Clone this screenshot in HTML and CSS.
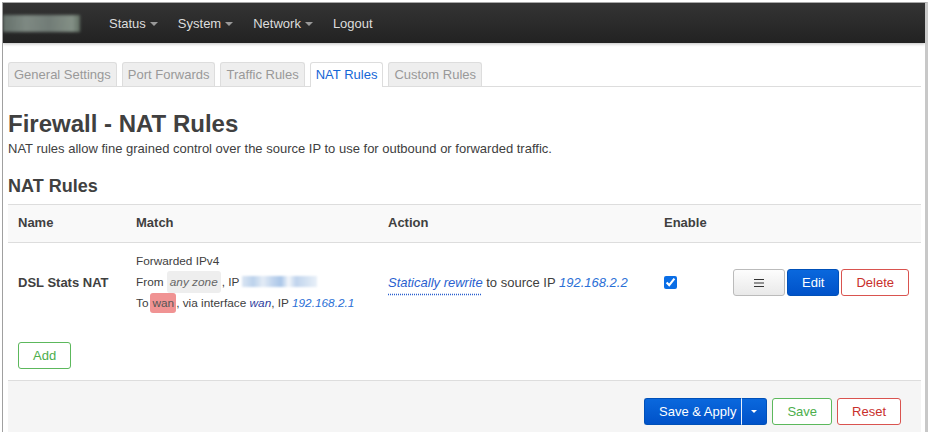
FILE: index.html
```html
<!DOCTYPE html>
<html>
<head>
<meta charset="utf-8">
<title>Firewall - NAT Rules</title>
<link rel="stylesheet" href="styles.css">
</head>
<body>
<div class="window">
  <header class="navbar">
    <div class="brand"></div>
    <ul class="menu">
      <li class="menu-item">Status<span class="caret"></span></li>
      <li class="menu-item">System<span class="caret"></span></li>
      <li class="menu-item">Network<span class="caret"></span></li>
      <li class="menu-item">Logout</li>
    </ul>
  </header>
  <main class="main">
    <ul class="tabs">
      <li class="tab">General Settings</li>
      <li class="tab">Port Forwards</li>
      <li class="tab">Traffic Rules</li>
      <li class="tab active">NAT Rules</li>
      <li class="tab">Custom Rules</li>
    </ul>
    <h2 class="title">Firewall - NAT Rules</h2>
    <p class="desc">NAT rules allow fine grained control over the source IP to use for outbound or forwarded traffic.</p>
    <h3 class="section-title">NAT Rules</h3>
    <div class="table">
      <div class="thead">
        <div class="th">Name</div>
        <div class="th">Match</div>
        <div class="th">Action</div>
        <div class="th">Enable</div>
        <div class="th"></div>
      </div>
      <div class="trow">
        <div class="td name">DSL Stats NAT</div>
        <div class="td match">
          <div class="line">Forwarded IPv4</div>
          <div class="line">From <span class="zone any">any zone</span>, IP <span class="blur-ip"></span></div>
          <div class="line">To<span class="zone wan">wan</span>, via interface <em class="dev">wan</em>, IP <em class="ip">192.168.2.1</em></div>
        </div>
        <div class="td action"><a class="link">Statically rewrite</a> to source IP <em class="ip">192.168.2.2</em></div>
        <div class="td enable"><input type="checkbox" class="check" checked></div>
        <div class="td buttons">
          <button class="btn btn-plain" aria-label="Drag"><svg width="10" height="10" viewBox="0 0 10 10"><path d="M0 1.5H10M0 5H10M0 8.5H10" stroke="#333" stroke-width="1.2" fill="none"/></svg></button>
          <button class="btn btn-primary">Edit</button>
          <button class="btn btn-negative">Delete</button>
        </div>
      </div>
    </div>
    <div class="add-row">
      <button class="btn btn-positive">Add</button>
    </div>
    <div class="footer">
      <div class="split">
        <button class="btn btn-primary split-main">Save &amp; Apply</button><button class="btn btn-primary split-caret" aria-label="More"><span class="caret-w"></span></button>
      </div>
      <button class="btn btn-positive">Save</button>
      <button class="btn btn-negative">Reset</button>
    </div>
  </main>
</div>
</body>
</html>
```
FILE: styles.css
```css
* { box-sizing: border-box; }
body {
  margin: 0;
  font-family: "Liberation Sans", Arial, sans-serif;
  color: #404040;
  background: #fff;
}
.window {
  margin: 2px 0 0 2px;
  border-top: 1px solid #a8a8a8;
  border-left: 1px solid #a0a0a0;
  border-right: 3px solid #c8c8c8;
  height: 430px;
  overflow: hidden;
}
.navbar {
  height: 40px;
  display: flex;
  align-items: center;
  background: linear-gradient(#343434, #222);
  box-shadow: 0 1px 3px rgba(0,0,0,.25);
}
.brand {
  width: 77px;
  height: 17px;
  margin-right: 19px;
  background: linear-gradient(90deg, #6f7c76, #8d9a92 30%, #7e8a84 60%, #93a296 90%, #6a7a6c);
  filter: blur(1.5px);
  opacity: .85;
}
.menu {
  display: flex;
  list-style: none;
  margin: 0;
  padding: 0;
}
.menu-item {
  padding: 0 10px;
  font-size: 13px;
  color: #ddd;
  display: flex;
  align-items: center;
}
.caret {
  width: 0;
  height: 0;
  margin-left: 4px;
  margin-top: 1px;
  border-top: 4px solid #999;
  border-left: 4px solid transparent;
  border-right: 4px solid transparent;
}
.main {
  padding: 0 4px 0 5px;
}
.tabs {
  list-style: none;
  margin: 19px 0 0;
  padding: 0;
  display: flex;
  border-bottom: 1px solid #ddd;
  height: 25px;
}
.tab {
  height: 24px;
  line-height: 23px;
  padding: 0 5px;
  margin-right: 5px;
  font-size: 13px;
  color: #999;
  background: #eee;
  border: 1px solid #ddd;
  border-bottom: none;
  border-radius: 3px 3px 0 0;
}
.tab.active {
  background: #fff;
  color: #1466d6;
  height: 25px;
}
.title {
  margin: 23px 0 0;
  font-size: 24px;
  line-height: 28px;
  font-weight: bold;
  color: #404040;
}
.desc {
  margin: 2px 0 0;
  font-size: 13px;
  line-height: 18px;
  color: #404040;
}
.section-title {
  margin: 16px 0 0;
  font-size: 18px;
  line-height: 24px;
  font-weight: bold;
  color: #404040;
}
.table {
  margin-top: 6px;
}
.thead, .trow {
  display: grid;
  grid-template-columns: 118px 252px 276px 60px 1fr;
}
.thead {
  background: #f9f9f9;
  border-top: 1px solid #ddd;
  border-bottom: 1px solid #ddd;
  height: 39px;
}
.th {
  padding: 10px 10px 0;
  font-size: 13px;
  line-height: 16px;
  font-weight: bold;
  color: #404040;
}
.trow {
  padding: 8px 0;
}
.td {
  padding: 0 10px;
  align-self: center;
  font-size: 13px;
}
.name {
  font-weight: bold;
  color: #404040;
}
.match {
  font-size: 11.8px;
  color: #404040;
}
.line {
  height: 21px;
  line-height: 21px;
  white-space: nowrap;
}
.zone {
  display: inline-block;
  vertical-align: middle;
  border-radius: 3px;
  margin-top: -2px;
}
.zone.any {
  background: #eee;
  color: #666;
  font-style: italic;
  line-height: 18px;
  padding: 2px 3px;
  margin-right: 1px;
}
.zone.wan {
  background: #f09393;
  color: #555;
  line-height: 16px;
  padding: 2px 2px;
  margin-left: 2px;
}
.blur-ip {
  display: inline-block;
  vertical-align: middle;
  margin-top: -3px;
  width: 75px;
  height: 11px;
  background: linear-gradient(90deg, #dbe6f3 0, #bcd2ec 15%, #e4ecf6 28%, #c3d6ee 40%, #aac6e8 52%, #f4f7fb 62%, #c0d4ed 72%, #d3e1f2 85%, #e9f0f8 100%);
  filter: blur(1.2px);
}
.dev {
  color: #2e3ea0;
}
.ip {
  color: #2a6fd6;
}
.action {
  white-space: nowrap;
}
.link {
  color: #2a5fcf;
  font-style: italic;
  text-decoration: underline dotted #2a5fcf;
  text-underline-offset: 7px;
}
.enable {
  line-height: 0;
}
.check {
  margin: 0;
  width: 13px;
  height: 13px;
  accent-color: #0a6ee6;
}
.buttons {
  display: flex;
  justify-content: flex-end;
  gap: 2px;
  padding-right: 12px;
}
.btn {
  height: 27px;
  line-height: 25px;
  padding: 0 14px;
  font-family: "Liberation Sans", Arial, sans-serif;
  font-size: 13px;
  border-radius: 3px;
  border: 1px solid #ccc;
  background: #fff;
  cursor: pointer;
}
.btn-plain {
  width: 52px;
  padding: 0;
  display: flex;
  align-items: center;
  justify-content: center;
  background: linear-gradient(#fdfdfd, #e9e9e9);
  border-color: #bbb;
}
.btn-primary {
  background: linear-gradient(#0a68dd, #0052c9);
  border-color: #0050b8;
  color: #fff;
}
.btn-negative {
  color: #c9302c;
  border-color: #d9534f;
  background: #fff;
}
.btn-positive {
  color: #4cae4c;
  border-color: #5cb85c;
  background: #fff;
}
.add-row {
  padding: 20px 10px 11px;
}
.footer {
  border-top: 1px solid #ddd;
  background: #f5f5f5;
  padding: 17px 20px 20px;
  display: flex;
  justify-content: flex-end;
  gap: 5px;
}
.split {
  display: flex;
}
.split-main {
  border-radius: 3px 0 0 3px;
  border-right: 1px solid #e8f0fc;
  padding: 0 5px 0 14px;
}
.split-caret {
  width: 25px;
  padding: 0;
  border-left: none;
  border-radius: 0 3px 3px 0;
  display: flex;
  align-items: center;
  justify-content: center;
}
.caret-w {
  width: 0;
  height: 0;
  border-top: 3px solid #fff;
  border-left: 3px solid transparent;
  border-right: 3px solid transparent;
}
```
